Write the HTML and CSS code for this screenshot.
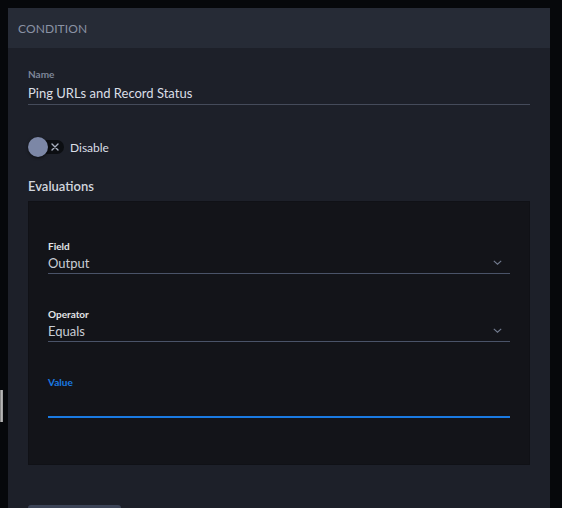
FILE: index.html
```html
<!DOCTYPE html>
<html>
<head>
<meta charset="utf-8">
<link rel="stylesheet" href="styles.css">
</head>
<body>
<div class="edge-grip"></div>
<section class="panel">
  <header class="panel-head">CONDITION</header>
  <div class="panel-body">
    <div class="field name-field">
      <label class="field-label">Name</label>
      <div class="field-value">Ping URLs and Record Status</div>
    </div>
    <div class="toggle-row">
      <span class="toggle">
        <span class="toggle-track">
          <svg class="toggle-x" width="8" height="8" viewBox="0 0 8 8"><path d="M1 1L7 7M7 1L1 7" stroke="#a9b0c0" stroke-width="1.4" stroke-linecap="round"/></svg>
        </span>
        <span class="toggle-knob"></span>
      </span>
      <span class="toggle-text">Disable</span>
    </div>
    <h3 class="section-title">Evaluations</h3>
    <div class="eval-box">
      <div class="eval-field">
        <label class="eval-label">Field</label>
        <div class="select">
          <span class="select-value">Output</span>
          <svg class="chev" width="9" height="5" viewBox="0 0 9 5"><path d="M0.8 0.8L4.5 4.2L8.2 0.8" fill="none" stroke="#737c90" stroke-width="1.1"/></svg>
        </div>
      </div>
      <div class="eval-field">
        <label class="eval-label">Operator</label>
        <div class="select">
          <span class="select-value">Equals</span>
          <svg class="chev" width="9" height="5" viewBox="0 0 9 5"><path d="M0.8 0.8L4.5 4.2L8.2 0.8" fill="none" stroke="#737c90" stroke-width="1.1"/></svg>
        </div>
      </div>
      <div class="eval-field value-field">
        <label class="eval-label active">Value</label>
        <div class="text-input"></div>
      </div>
    </div>
    <div class="bottom-btn"></div>
  </div>
</section>
</body>
</html>
```
FILE: styles.css
```css
* { box-sizing: border-box; }
html, body { margin: 0; padding: 0; }
body {
  background: #06080b;
  font-family: "Lato", "Noto Sans", sans-serif;
  color: #d6dae2;
  height: 508px;
  overflow: hidden;
  position: relative;
}
.edge-grip {
  position: absolute;
  left: 0;
  top: 390px;
  width: 3px;
  height: 32px;
  background: linear-gradient(90deg, #6d6d6d, #c4c4c4 60%, #8a8a8a);
}
.panel {
  margin: 8px 12px 0 8px;
  background: #1d2029;
  height: 520px;
}
.panel-head {
  height: 40px;
  background: #262b36;
  padding-left: 10px;
  display: flex;
  align-items: center;
  font-size: 12px;
  color: #8a92a4;
  letter-spacing: 0.1px;
}
.panel-body {
  padding: 20px 20px 0 20px;
}
.field-label {
  display: block;
  font-size: 10px;
  line-height: 12px;
  font-weight: 700;
  color: #7d8699;
}
.field-value {
  font-size: 13px;
  line-height: 18px;
  margin-top: 4px;
  padding-bottom: 2px;
  border-bottom: 1px solid #454b5a;
  color: #dadee6;
}
.toggle-row {
  display: flex;
  align-items: center;
  margin-top: 31px;
  height: 22px;
}
.toggle {
  position: relative;
  width: 36px;
  height: 22px;
  display: inline-block;
}
.toggle-track {
  position: absolute;
  left: 8px;
  top: 4px;
  width: 28px;
  height: 14px;
  border-radius: 7px;
  background: #0c0e12;
  display: flex;
  align-items: center;
  justify-content: flex-end;
  padding-right: 5px;
}
.toggle-knob {
  position: absolute;
  left: 0;
  top: 1px;
  width: 20px;
  height: 20px;
  border-radius: 50%;
  background: #7c87a6;
  box-shadow: 0 1px 3px rgba(0,0,0,0.6);
}
.toggle-text {
  margin-left: 6px;
  font-size: 12px;
  color: #dadee6;
}
.section-title {
  margin: 20px 0 0 0;
  font-size: 13px;
  line-height: 16px;
  font-weight: 600;
  color: #d2d6de;
}
.eval-box {
  margin-top: 7px;
  height: 264px;
  background: #131419;
  border: 1px solid #101116;
  padding: 38px 19px 0 19px;
}
.eval-field + .eval-field {
  margin-top: 34px;
}
.eval-label {
  display: block;
  font-size: 10px;
  line-height: 12px;
  font-weight: 700;
  color: #e2e4e8;
}
.eval-label.active {
  color: #1a7ae2;
}
.select {
  display: flex;
  align-items: center;
  justify-content: space-between;
  height: 22px;
  border-bottom: 1px solid #4a5368;
  padding-right: 8px;
}
.select-value {
  font-size: 13px;
  color: #c9cdd5;
}
.text-input {
  height: 30px;
  border-bottom: 2px solid #1a7ae2;
}
.bottom-btn {
  margin-top: 40px;
  width: 93px;
  height: 20px;
  border-radius: 3px;
  background: #3c4457;
}
```
